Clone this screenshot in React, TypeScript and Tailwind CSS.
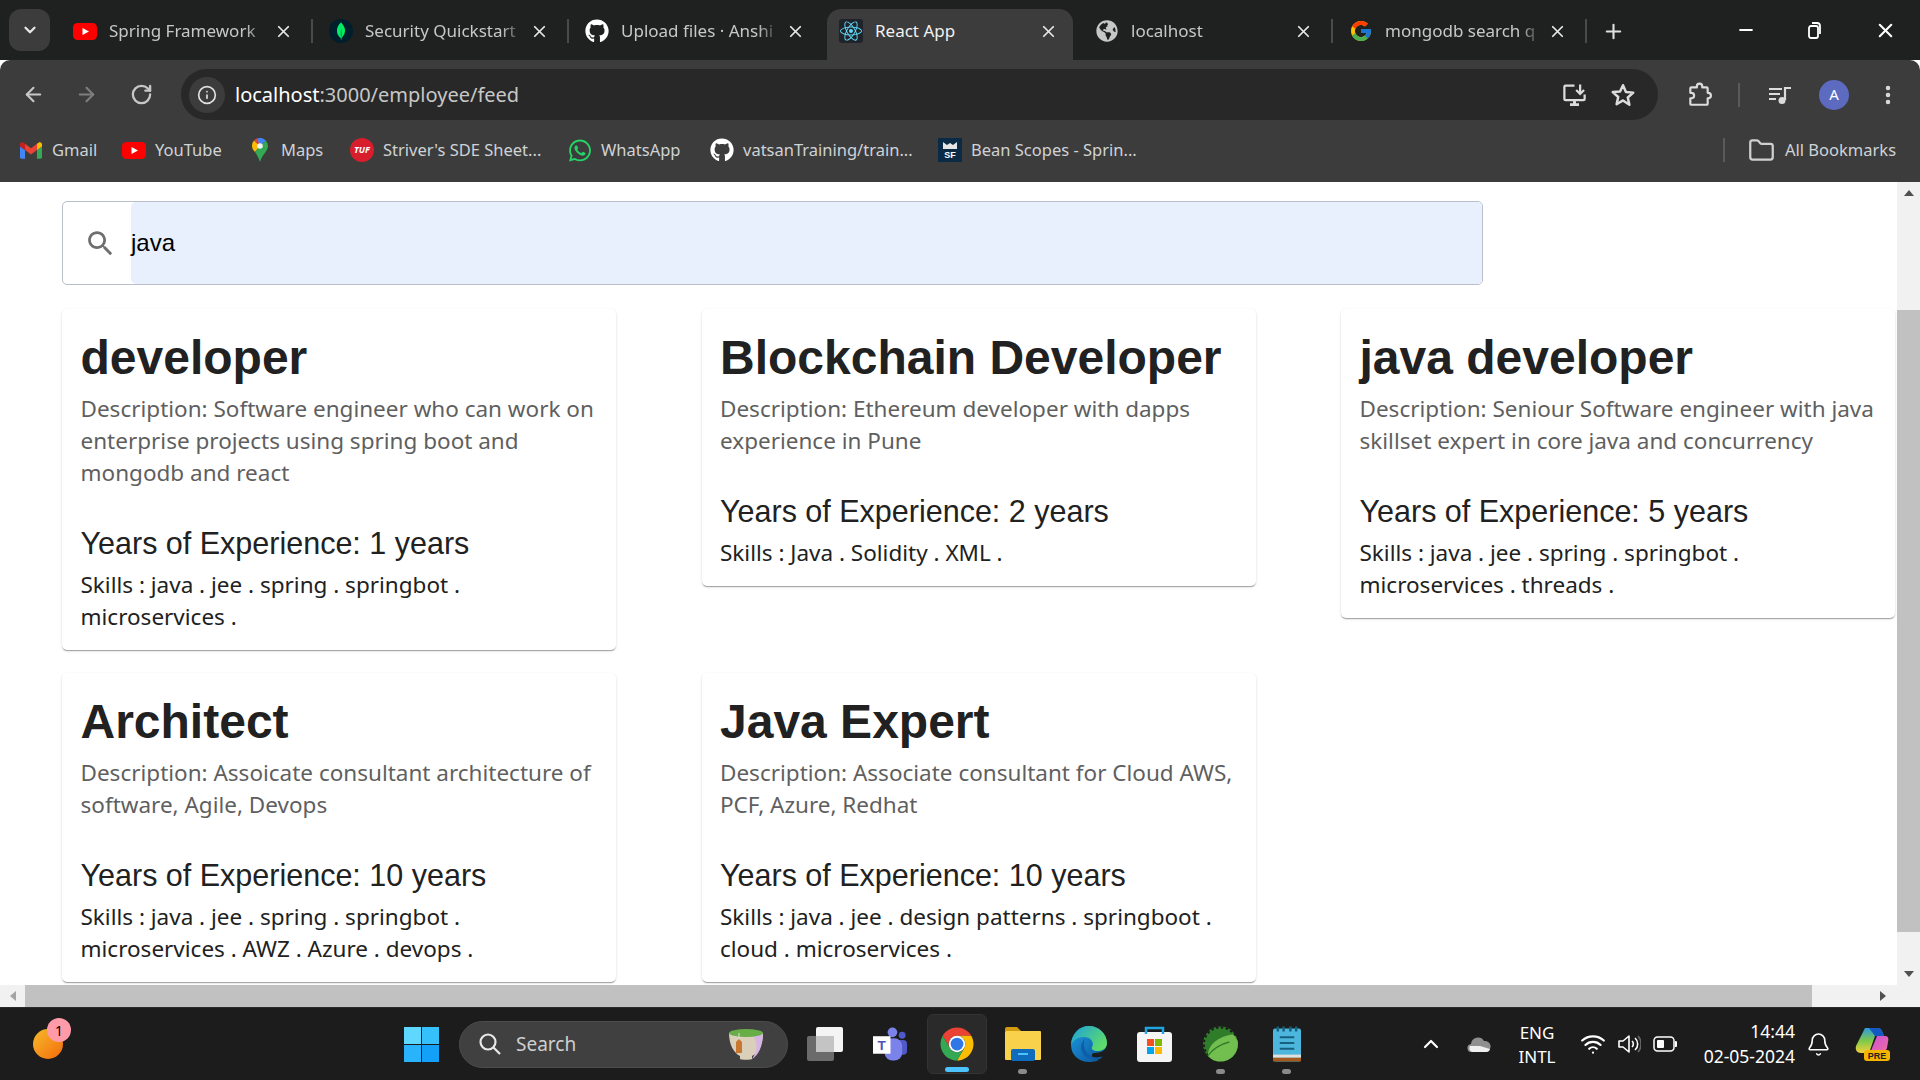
import React from "react";
import { ArrowLeft, ArrowRight, RotateCw, Info, X, Plus, Minus, ChevronDown, ChevronUp, Folder, Wifi, Bell, EllipsisVertical } from "lucide-react";
import { FaGithub, FaReact, FaWhatsapp, FaGlobeAmericas } from "react-icons/fa";
import { FcGoogle } from "react-icons/fc";
import { SiMongodb } from "react-icons/si";

const ui = "font-['Noto_Sans',sans-serif]";

function Tab({ w, icon, label, active, sep = true, inset = "pl-[16px]" }: { w: string; icon: React.ReactNode; label: string; active?: boolean; sep?: boolean; inset?: string }) {
  return (
    <div className={`${w} h-[51px] shrink-0 flex items-center ${inset} ${active ? "pr-[15px]" : "pr-[20px]"} pb-[7px] relative ${active ? "bg-[#3c3c3c] rounded-t-[14px]" : ""}`}>
      <span className="w-[24px] h-[24px] shrink-0 flex items-center justify-center">{icon}</span>
      <span className={`ml-[12px] flex-1 overflow-hidden whitespace-nowrap text-[17px] ${active ? "text-[#f1f1f1]" : "text-[#c7c7c7] [mask-image:linear-gradient(to_right,black_86%,transparent)]"}`}>{label}</span>
      <X size={19} strokeWidth={2.200} className="text-[#e6e6e6] shrink-0 ml-[6px]" />
      {sep && <span className="absolute right-0 top-[10px] h-[24px] w-[2px] bg-[#4a4a4a]" />}
    </div>
  );
}

function Mark({ icon, label, w }: { icon: React.ReactNode; label: string; w: string }) {
  return (
    <div className={`${w} shrink-0 flex items-center`}>
      <span className="w-[24px] h-[24px] flex items-center justify-center shrink-0">{icon}</span>
      <span className="ml-[9px] text-[16.5px] text-[#cfd3d6] whitespace-nowrap">{label}</span>
    </div>
  );
}

const Yt = () => (
  <svg viewBox="0 0 24 17" className="w-[24px] h-[17px]">
    <rect width="24" height="17" rx="4.500" fill="#f00" />
    <path d="M9.500 5l6.500 3.500-6.500 3.500z" fill="#fff" />
  </svg>
);
const Gmail = () => (
  <svg viewBox="0 0 24 18" className="w-[22px] h-[17px]">
    <path d="M1.600 18H5.500V8.500L0 4.500v11.900A1.600 1.600 0 0 0 1.600 18z" fill="#4285f4" />
    <path d="M18.500 18h3.900a1.600 1.600 0 0 0 1.600-1.600V4.500l-5.500 4z" fill="#34a853" />
    <path d="M18.500 1.600v6.900l5.500-4V2.400c0-2-2.300-3.100-3.800-1.900z" fill="#fbbc04" />
    <path d="M5.500 8.500V1.600L12 6.500l6.500-4.900v6.900L12 13.400z" fill="#ea4335" />
    <path d="M0 2.400v2.100l5.500 4V1.600L3.800.500C2.300-.7 0 .4 0 2.400z" fill="#c5221f" />
  </svg>
);
const Maps = () => (
  <svg viewBox="0 0 16 24" className="w-[16px] h-[24px]">
    <path d="M0 8c0 2.200 1.200 4.200 3 6l5-6-6-5.600A8 8 0 0 0 0 8z" fill="#fbbc04" />
    <path d="M2 2.400A8 8 0 0 1 5 .6L10 6 8 8z" fill="#ea4335" />
    <path d="M5 .6A8 8 0 0 1 14 2.700L8 8z" fill="#4285f4" />
    <path d="M3 14l5-6 6-5.300A8 8 0 0 1 16 8c0 5-5.500 8-8 16-1.200-4-3-7-5-10z" fill="#34a853" />
    <circle cx="8" cy="8" r="2.800" fill="#f2f2f2" />
  </svg>
);
const Chrome = ({ s = 36 }: { s?: number }) => (
  <svg viewBox="0 0 48 48" width={s} height={s}>
    <path d="M4.950 13A22 22 0 0 1 43.050 13H24A11 11 0 0 0 14.470 29.500z" fill="#ea4335" />
    <path d="M43.050 13A22 22 0 0 1 24 46L33.530 29.500A11 11 0 0 0 24 13z" fill="#fbbc04" />
    <path d="M24 46A22 22 0 0 1 4.950 13L14.470 29.500A11 11 0 0 0 33.530 29.500z" fill="#34a853" />
    <circle cx="24" cy="24" r="11" fill="#fff" />
    <circle cx="24" cy="24" r="8.500" fill="#2f76e6" />
  </svg>
);
const Tri = ({ cls }: { cls: string }) => <span className={`block w-0 h-0 ${cls}`} />;

function Card({ title, desc, years, skills }: { title: string; desc: string; years: number; skills: string }) {
  return (
    <div className="bg-white rounded-[5px] shadow-[0_2px_1px_-1px_rgba(0,0,0,0.2),0_1px_1px_0_rgba(0,0,0,0.14),0_1px_3px_0_rgba(0,0,0,0.12)] px-[18.500px] pt-[20px] pb-[17px]">
      <div className="font-['Liberation_Sans',sans-serif] font-bold text-[48px] leading-[58px] text-[#212121]">{title}</div>
      <div className="mt-[6px] font-['Noto_Sans',sans-serif] text-[22.500px] leading-[32px] text-[#5f5f5f]">{desc}</div>
      <div className="mt-[35px] font-['Liberation_Sans',sans-serif] text-[30.500px] leading-[38px] text-[#212121]">Years of Experience: {years} years</div>
      <div className="mt-[7px] font-['Noto_Sans',sans-serif] text-[22.500px] leading-[32px] text-[#212121]">{skills}</div>
    </div>
  );
}

export default function App() {
  return (
    <div className={`w-[1920px] h-[1080px] overflow-hidden flex flex-col bg-white ${ui}`}>
      {/* tab strip */}
      <div className="h-[60px] shrink-0 bg-[#1f2121] flex items-end pl-[9px]">
        <div className="w-[41px] h-[42px] mb-[9px] rounded-[12px] bg-[#3c3c3c] flex items-center justify-center shrink-0">
          <ChevronDown size={18} strokeWidth={3} className="text-[#e8e8e8]" />
        </div>
        <Tab w="w-[256px] ml-[7px]" icon={<Yt />} label="Spring Framework" />
        <Tab w="w-[256px]" icon={<span className="w-[24px] h-[24px] rounded-full bg-[#001e2b] flex items-center justify-center"><SiMongodb size={18} className="text-[#00ed64]" /></span>} label="Security Quickstart" />
        <Tab w="w-[256px]" icon={<FaGithub size={24} className="text-white" />} label="Upload files · Anshi" sep={false} />
        <Tab w="w-[246px] ml-[2px]" inset="pl-[12px]" icon={<span className="w-[24px] h-[24px] rounded-[3px] bg-[#20232a] flex items-center justify-center"><FaReact size={22} className="text-[#61dafb]" /></span>} label="React App" active sep={false} />
        <Tab w="w-[254px] ml-[6px]" icon={<FaGlobeAmericas size={22} className="text-[#c7c7c7]" />} label="localhost" />
        <Tab w="w-[254px]" icon={<FcGoogle size={24} />} label="mongodb search q" />
        <div className="h-[51px] w-[52px] pb-[7px] flex items-center justify-center shrink-0">
          <Plus size={23} strokeWidth={2.200} className="text-[#e0e0e0]" />
        </div>
        <div className="flex-1" />
        <div className="h-[60px] flex items-center pr-[23px] gap-[51px]">
          <Minus size={20} strokeWidth={2.500} className="text-white" />
          <svg viewBox="0 0 16 18" className="w-[16px] h-[18px]" fill="none" stroke="white" strokeWidth="1.800"><rect x="2" y="5" width="9" height="12" rx="2" /><path d="M5 2h5a3 3 0 0 1 3 3v8" /></svg>
          <X size={23} strokeWidth={2.200} className="text-white" />
        </div>
      </div>
      {/* toolbar */}
      <div className="h-[69px] shrink-0 bg-[#3c3c3c] rounded-t-[10px] flex items-end pb-[9px]">
        <div className="flex items-center h-[51px] w-[181px] shrink-0 pl-[22px]">
          <ArrowLeft size={23} strokeWidth={2.200} className="text-[#c7c7c7]" />
          <ArrowRight size={23} strokeWidth={2.200} className="text-[#7e7e7e] ml-[30px]" />
          <RotateCw size={23} strokeWidth={2.400} className="text-[#c7c7c7] ml-[32px]" />
        </div>
        <div className="w-[1477px] h-[51px] shrink-0 bg-[#282828] rounded-full flex items-center pl-[8px] pr-[22px]">
          <span className="w-[36px] h-[36px] bg-[#3c3c3c] rounded-full flex items-center justify-center">
            <Info size={20} className="text-[#e0e0e0]" />
          </span>
          <span className="ml-[10px] text-[20px] text-[#c7c7c7] whitespace-nowrap"><span className="text-white">localhost</span>:3000/employee/feed</span>
          <span className="flex-1" />
          <svg viewBox="0 0 24 24" className="w-[27px] h-[27px]" fill="none" stroke="#dcdcdc" strokeWidth="2"><path d="M12 4H4a1 1 0 0 0-1 1v11a1 1 0 0 0 1 1h16a1 1 0 0 0 1-1v-4" /><path d="M8 21h8M12 17v4" strokeWidth="2.600" /><path d="M17 3v8M13.500 8l3.500 3.500L20.500 8" /></svg>
          <svg viewBox="0 0 24 24" className="w-[26px] h-[26px] ml-[22px]" fill="none" stroke="#dcdcdc" strokeWidth="2.300" strokeLinejoin="round"><path d="M12 3l2.700 6.200 6.800.6-5.100 4.500 1.500 6.700L12 17l-5.900 3.500 1.500-6.700-5.100-4.500 6.800-.6z" /></svg>
        </div>
        <div className="flex-1 h-[51px] flex items-center pl-[28px]">
          <svg viewBox="0 0 24 24" className="w-[26px] h-[26px]" fill="none" stroke="#dcdcdc" strokeWidth="2" strokeLinejoin="round"><path d="M5 5h5V4a2.500 2.500 0 0 1 5 0v1h4a1 1 0 0 1 1 1v4h.5a2.500 2.500 0 0 1 0 5H20v5a1 1 0 0 1-1 1H5a1 1 0 0 1-1-1v-5h1a2.500 2.500 0 0 0 0-5H4V6a1 1 0 0 1 1-1z" /></svg>
          <span className="w-[2px] h-[24px] bg-[#5a5a5a] ml-[26px]" />
          <svg viewBox="0 0 24 20" className="w-[24px] h-[20px] ml-[28px]" fill="none" stroke="#dcdcdc" strokeWidth="2"><path d="M1 4h13M1 9h11M1 14h7" /><path d="M17 15V3h6" strokeWidth="2.200" /><circle cx="14" cy="15.500" r="3.500" fill="#dcdcdc" stroke="none" /></svg>
          <span className="w-[30px] h-[30px] rounded-full bg-[#5c6bc0] ml-[27px] flex items-center justify-center text-white text-[15px]">A</span>
          <EllipsisVertical size={24} strokeWidth={2.500} className="text-[#dcdcdc] ml-[27px]" />
        </div>
      </div>
      {/* bookmarks */}
      <div className="h-[51px] shrink-0 bg-[#3c3c3c] flex items-center pl-[19px] pb-[9px]">
        <Mark w="w-[103px]" icon={<Gmail />} label="Gmail" />
        <Mark w="w-[126px]" icon={<Yt />} label="YouTube" />
        <Mark w="w-[102px]" icon={<Maps />} label="Maps" />
        <Mark w="w-[218px]" icon={<span className="w-[24px] h-[24px] rounded-full bg-[#d81e2c] text-white text-[9px] font-bold italic flex items-center justify-center">TUF</span>} label="Striver's SDE Sheet..." />
        <Mark w="w-[142px]" icon={<FaWhatsapp size={25} className="text-[#25d366]" />} label="WhatsApp" />
        <Mark w="w-[228px]" icon={<FaGithub size={24} className="text-white" />} label="vatsanTraining/train..." />
        <Mark w="w-[240px]" icon={
          <svg viewBox="0 0 24 24" className="w-[24px] h-[24px]">
            <rect width="24" height="24" fill="#0b2a46" />
            <path d="M5 11V4l4 3 3-2 3 2 4-3v7z" fill="#e6e6e6" />
            <text x="12" y="20" fontSize="9" fontWeight="700" textAnchor="middle" fill="#fff" fontFamily="'Liberation Sans',sans-serif">SF</text>
          </svg>
        } label="Bean Scopes - Sprin..." />
        <span className="ml-[545px] w-[2px] h-[24px] bg-[#5a5a5a]" />
        <Folder size={27} strokeWidth={2} className="text-[#cfcfcf] ml-[23px]" />
        <span className="ml-[10px] text-[16.500px] text-[#cfd3d6] whitespace-nowrap">All Bookmarks</span>
      </div>
      <div className="h-[2px] shrink-0 bg-[#3c3c3c]" />
      {/* page */}
      <div className="flex-1 min-h-0 flex flex-col">
        <div className="flex-1 min-h-0 flex">
          <div className="flex-1 min-w-0 pl-[62px] pr-[2px] pt-[19px] overflow-hidden">
            <div className="w-[1421px] h-[84px] rounded-[5px] border border-[#b9bec9] flex overflow-hidden">
              <div className="w-[68px] shrink-0 flex items-center pl-[21px]">
                <svg viewBox="0 0 24 24" className="w-[33px] h-[33px]" fill="#6e6e6e"><path d="M15.500 14h-.79l-.28-.27C15.410 12.590 16 11.110 16 9.500 16 5.910 13.090 3 9.500 3S3 5.910 3 9.500 5.910 16 9.500 16c1.610 0 3.090-.59 4.230-1.570l.27.28v.79l5 4.990L20.490 19l-4.990-5zm-6 0C7.010 14 5 11.990 5 9.500S7.010 5 9.500 5 14 7.010 14 9.500 11.990 14 9.500 14z" /></svg>
              </div>
              <div className="flex-1 bg-[#e8f0fe] rounded-l-[5px] flex items-center text-[24px] text-black font-['Liberation_Sans',sans-serif]">java</div>
            </div>
            <div className="mt-[24px] grid grid-cols-[554px_554px_554px] gap-x-[85.500px] gap-y-[23px] items-start">
              <Card title="developer" desc="Description: Software engineer who can work on enterprise projects using spring boot and mongodb and react" years={1} skills="Skills : java . jee . spring . springbot . microservices ." />
              <Card title="Blockchain Developer" desc="Description: Ethereum developer with dapps experience in Pune" years={2} skills="Skills : Java . Solidity . XML ." />
              <Card title="java developer" desc="Description: Seniour Software engineer with java skillset expert in core java and concurrency" years={5} skills="Skills : java . jee . spring . springbot . microservices . threads ." />
              <Card title="Architect" desc="Description: Assoicate consultant architecture of software, Agile, Devops" years={10} skills="Skills : java . jee . spring . springbot . microservices . AWZ . Azure . devops ." />
              <Card title="Java Expert" desc="Description: Associate consultant for Cloud AWS, PCF, Azure, Redhat" years={10} skills="Skills : java . jee . design patterns . springboot . cloud . microservices ." />
            </div>
          </div>
          {/* vertical scrollbar */}
          <div className="w-[23px] shrink-0 bg-[#f1f1f1] flex flex-col items-center">
            <div className="h-[22px] flex items-center justify-center"><Tri cls="border-x-[5px] border-x-transparent border-b-[6px] border-b-[#505050]" /></div>
            <div className="mt-[106px] h-[622px] w-full bg-[#c1c1c1]" />
            <div className="flex-1 flex items-end pb-[8px]"><Tri cls="border-x-[5px] border-x-transparent border-t-[6px] border-t-[#505050]" /></div>
          </div>
        </div>
        {/* horizontal scrollbar */}
        <div className="h-[22px] shrink-0 bg-[#f1f1f1] flex items-center">
          <div className="w-[25px] flex justify-center"><Tri cls="border-y-[5px] border-y-transparent border-r-[6px] border-r-[#a3a3a3]" /></div>
          <div className="w-[1787px] h-full bg-[#c1c1c1]" />
          <div className="flex-1 pl-[68px]"><Tri cls="border-y-[5px] border-y-transparent border-l-[6px] border-l-[#505050]" /></div>
        </div>
      </div>
      {/* taskbar */}
      <div className="h-[73px] shrink-0 bg-[#1c1c1c] border-t border-[#2a2a2a] flex items-center relative">
        <div className="ml-[33px] relative w-[30px] h-[30px]">
          <span className="block w-[30px] h-[30px] rounded-full bg-gradient-to-br from-[#f4b92b] to-[#f36a07]" />
          <span className="absolute left-[14px] top-[-11px] w-[24px] h-[24px] rounded-full bg-[#ff9aa8] text-[14px] text-black flex items-center justify-center">1</span>
        </div>
        <svg viewBox="0 0 35 35" className="w-[35px] h-[35px] ml-[341px]">
          <rect width="17" height="17" fill="#5fd8ff" /><rect x="18" width="17" height="17" fill="#35c0fb" /><rect y="18" width="17" height="17" fill="#29b3fb" /><rect x="18" y="18" width="17" height="17" fill="#13a0f8" />
        </svg>
        <div className="ml-[20px] w-[329px] h-[47px] rounded-full bg-[#404040] border border-[#4c4c4c] flex items-center pl-[18px] pr-[23px]">
          <svg viewBox="0 0 24 24" className="w-[24px] h-[24px]" fill="none" stroke="#e8e8e8" strokeWidth="2.200"><circle cx="10" cy="10" r="7.500" /><path d="M15.500 15.500L22 22" /></svg>
          <span className="ml-[14px] text-[19px] text-[#cfcfcf] flex-1">Search</span>
          <svg viewBox="0 0 36 33" className="w-[36px] h-[33px]">
            <path d="M1 5c0 12 5 20 11 23v3c0 1 12 1 12 0v-3c6-3 11-11 11-23z" fill="#dacfb8" />
            <path d="M24 6c6 9 6 16 0 25 6-3 11-13 11-25z" fill="#d7b5e2" />
            <ellipse cx="18" cy="5" rx="17" ry="4" fill="#67ad48" />
            <path d="M8 14l3-3 3 3v11H8z" fill="#c9772f" />
            <path d="M11 5v6" stroke="#ddd" strokeWidth="1" />
          </svg>
        </div>
        <svg viewBox="0 0 36 34" className="w-[36px] h-[34px] ml-[19px]"><rect x="0" y="9" width="27" height="25" rx="2" fill="#6b6b6b" /><rect x="9" y="0" width="27" height="25" rx="2" fill="#f4f4f4" /><rect x="9" y="9" width="18" height="16" fill="#c4c4c4" /></svg>
        <svg viewBox="0 0 36 34" className="w-[35px] h-[34px] ml-[30px]"><circle cx="20" cy="5" r="5" fill="#7b83eb" /><circle cx="30" cy="8" r="3.500" fill="#5059c9" /><rect x="25" y="13" width="10" height="15" rx="4" fill="#5059c9" /><rect x="12" y="11" width="18" height="23" rx="8" fill="#7b83eb" /><rect x="0" y="9" width="18" height="18" fill="#fff" /><text x="9" y="23" fontSize="14" fontWeight="700" textAnchor="middle" fill="#4b53bc" fontFamily="'Liberation Sans',sans-serif">T</text></svg>
        <div className="ml-[19px] w-[60px] h-[60px] rounded-[6px] bg-[#2a2a2a] border border-[#333] flex items-center justify-center relative">
          <Chrome s={36} />
          <span className="absolute bottom-[1px] left-[17px] w-[24px] h-[5px] rounded-full bg-[#4cc2ff]" />
        </div>
        <svg viewBox="0 0 36 34" className="w-[36px] h-[34px] ml-[18px]"><path d="M0 2a2 2 0 0 1 2-2h10l4 4H0z" fill="#d39b10" /><rect y="4" width="36" height="29" rx="1" fill="#f9d14a" /><rect x="6" y="22" width="24" height="12" rx="2" fill="#0f6cbd" /><path d="M13 27h10" stroke="#4cc2ff" strokeWidth="2" /></svg>
        <svg viewBox="0 0 36 36" className="w-[36px] h-[36px] ml-[30px]">
          <defs>
            <linearGradient id="eA" x1="0" y1="0" x2="1" y2="1"><stop offset="0" stopColor="#1b9de2" /><stop offset="1" stopColor="#0c4f96" /></linearGradient>
            <linearGradient id="eB" x1="0" y1="0" x2="1" y2="0.600"><stop offset="0" stopColor="#1d9fdc" /><stop offset="1" stopColor="#5ddc6a" /></linearGradient>
          </defs>
          <path d="M0 19C0 8 8 0 18 0c10 0 18 8 18 18-1 9-9 9-13 9-2 0-3 3-1 5l6 2c-3 1.500-7 2-10 2C8 36 0 29 0 19z" fill="url(#eA)" />
          <path d="M18 0c10 0 18 8 18 17 0 6-5 8-9 8-5 0-7-2-6-4 3-5-2-10-8-10C7 11 2 14 0 19 1 8 8 0 18 0z" fill="url(#eB)" />
          <path d="M14 13c-3 6 0 15 8 18 4 1 7 0 10-1l-3 3c-6 2-13 0-16-4-5-6-3-13 1-16z" fill="#0d5ea8" />
          <path d="M36 20c-2 6-7 7-11 7 1 3 5 4 8 3l3-6z" fill="#1c1c1c" />
        </svg>
        <svg viewBox="0 0 35 36" className="w-[35px] h-[36px] ml-[30px]"><rect y="6" width="35" height="30" rx="3" fill="#f5f5f5" /><path d="M9 8V2h17v6" fill="none" stroke="#1fa5e0" strokeWidth="2.500" /><rect x="10" y="13" width="7" height="7" fill="#f25022" /><rect x="18" y="13" width="7" height="7" fill="#7fba00" /><rect x="10" y="21" width="7" height="7" fill="#00a4ef" /><rect x="18" y="21" width="7" height="7" fill="#ffb900" /></svg>
        <svg viewBox="0 0 36 36" className="w-[35px] h-[36px] ml-[31px]"><circle cx="18" cy="18" r="18" fill="#2f7d2a" /><circle cx="18" cy="18" r="17" fill="none" stroke="#1c1c1c" strokeWidth="2" strokeDasharray="2.500 2.500" /><path d="M36 18c0 10-8 18-18 18-5 0-10-2-13-6 0-12 12-20 26-22 3 3 5 6 5 10z" fill="#72be4f" /><path d="M5 30c6-8 14-12 22-14" fill="none" stroke="#2f7d2a" strokeWidth="1.500" /></svg>
        <svg viewBox="0 0 29 36" className="w-[28px] h-[36px] ml-[35px]"><rect y="2" width="29" height="34" rx="2" fill="#4db6dd" /><rect y="32" width="29" height="4" fill="#a5591c" /><rect y="29" width="29" height="3" fill="#e0e0e0" /><path d="M7 11h15M7 17h15M7 23h15" stroke="#17607f" strokeWidth="2" /><path d="M5 0v5M11 0v5M18 0v5M24 0v5" stroke="#17607f" strokeWidth="2.500" /></svg>
        <span className="absolute left-[1018px] top-[61px] w-[9px] h-[5px] rounded-full bg-[#8a8a8a]" />
        <span className="absolute left-[1216px] top-[61px] w-[9px] h-[5px] rounded-full bg-[#8a8a8a]" />
        <span className="absolute left-[1282px] top-[61px] w-[9px] h-[5px] rounded-full bg-[#8a8a8a]" />
        <ChevronUp size={24} strokeWidth={2.200} className="text-white ml-[118px]" />
        <svg viewBox="0 0 24 16" className="w-[24px] h-[16px] ml-[24px]"><path d="M5 16a4 4 0 0 1-1-8 7 7 0 0 1 13-3 5.500 5.500 0 0 1 2 11z" fill="#8f8f8f" /><path d="M5 16a4 4 0 0 1-2-6l10 0 10 3a4 4 0 0 1-4 3z" fill="#efefef" /></svg>
        <div className="ml-[24px] w-[44px] pt-[1px] text-center text-[17px] leading-[24px] text-white whitespace-nowrap">ENG<br />INTL</div>
        <Wifi size={26} className="text-white ml-[21px]" />
        <svg viewBox="0 0 24 24" className="w-[24px] h-[24px] ml-[11px]" fill="none" stroke="white" strokeWidth="1.600"><path d="M2 9v6h4l6 5V4L6 9z" strokeLinejoin="round" /><path d="M15 9a4 4 0 0 1 0 6" /><path d="M18 6a8 8 0 0 1 0 12" /><path d="M21 4a12 12 0 0 1 0 16" stroke="#666" /></svg>
        <svg viewBox="0 0 24 16" className="w-[24px] h-[16px] ml-[12px]"><rect x="1" y="1" width="20" height="14" rx="3.500" fill="none" stroke="white" strokeWidth="1.500" /><rect x="4" y="4" width="7" height="8" rx="1" fill="white" /><path d="M22 5a3 3 0 0 1 0 6z" fill="white" /></svg>
        <div className="ml-[16px] w-[102px] text-right text-[17.500px] leading-[25px] text-white whitespace-nowrap">14:44<br />02-05-2024</div>
        <Bell size={25} strokeWidth={1.500} className="text-white ml-[11px]" />
        <svg viewBox="0 0 35 34" className="w-[35px] h-[34px] ml-[24px]">
          <defs>
            <linearGradient id="cA" x1="0" y1="0" x2="0" y2="1"><stop offset="0" stopColor="#2b9be0" /><stop offset="0.500" stopColor="#7cc94a" /><stop offset="1" stopColor="#f3d13c" /></linearGradient>
            <linearGradient id="cB" x1="0" y1="0" x2="1" y2="1"><stop offset="0" stopColor="#c94fd8" /><stop offset="1" stopColor="#f36fa0" /></linearGradient>
          </defs>
          <path d="M10 1h13c2 0 3 1 4 3l2 5h-9l-6 17H6c-4 0-6-3-5-7z" fill="url(#cA)" />
          <path d="M22 9h8c3 0 4 2 3 6l-1 6c-1 3-3 5-6 5H15z" fill="url(#cB)" />
          <path d="M14 1h9c2 0 3 1 4 3l2 5h-9z" fill="#1558c0" />
          <rect x="9" y="23" width="26" height="11" rx="3" fill="#f5b400" />
          <text x="22" y="32" fontSize="9" fontWeight="700" textAnchor="middle" fill="#222" fontFamily="'Liberation Sans',sans-serif">PRE</text>
        </svg>
      </div>
    </div>
  );
}
